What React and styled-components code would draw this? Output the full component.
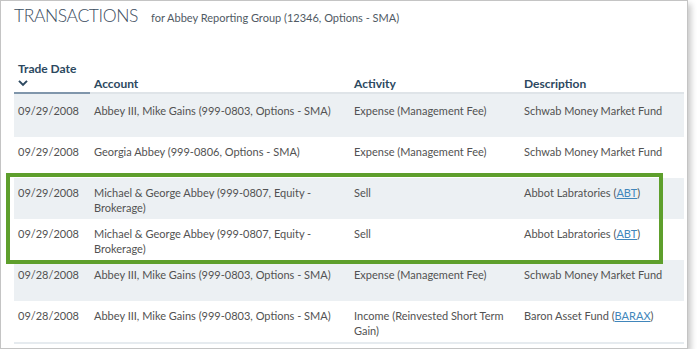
import React from 'react';
import styled, { createGlobalStyle } from 'styled-components';

const GlobalStyle = createGlobalStyle`
  body {
    margin: 0;
    background: #ffffff;
    font-family: Lato, "Open Sans", sans-serif;
  }
`;

const Frame = styled.div`
  width: 688px;
  height: 349px;
  border: 1px solid #c4c4c4;
  background: #fff;
  box-shadow: 3px 4px 6px rgba(0, 0, 0, 0.22);
  padding: 0 3px 0 13px;
  box-sizing: border-box;
  overflow: hidden;
`;

const TitleBar = styled.div`
  display: flex;
  align-items: baseline;
  gap: 13px;
  height: 56px;
  padding-top: 4px;
  box-sizing: border-box;
`;

const Title = styled.h1`
  margin: 0;
  font-size: 17.5px;
  font-weight: 300;
  color: #3b4d60;
  letter-spacing: -0.4px;
`;

const Subtitle = styled.span`
  font-size: 11px;
  color: #505a64;
`;

const Grid = styled.div`
  display: grid;
  grid-template-columns: 76px 260px 170px 1fr;
`;

const HeadRow = styled(Grid)`
  align-items: end;
  height: 37px;
`;

const HeadCell = styled.div`
  padding: 0 4px 1px;
  font-size: 12px;
  font-weight: 700;
  color: #2c4860;
  line-height: 15px;
  border-bottom: 2px solid ${(p) => (p.$sorted ? '#8096ab' : '#dfe4e8')};
`;

const SortMark = styled.div`
  display: flex;
  align-items: center;
  height: 15px;
`;

const Chevron = styled.svg`
  display: block;
  width: 10px;
  height: 7px;
`;

const Row = styled(Grid)`
  height: ${(p) => (p.$first ? '43px' : '41px')};
  background: ${(p) => (p.$shade ? '#ecf0f3' : '#ffffff')};
`;

const Cell = styled.div`
  padding: ${(p) => (p.$first ? '9px' : '7px')} 4px 0;
  font-size: 11px;
  line-height: 15px;
  color: #525252;
`;

const Ticker = styled.a`
  color: #4186bb;
  text-decoration: underline;
`;

const Group = styled.div`
  position: relative;
`;

const Highlight = styled.div`
  position: absolute;
  top: -5px;
  bottom: -4px;
  left: -8px;
  right: 21px;
  border: 4px solid #5e9f2c;
  pointer-events: none;
`;

const BottomRule = styled.div`
  height: 2px;
  background: #e6ebef;
`;

const rows = [
  { date: '09/29/2008', account: 'Abbey III, Mike Gains (999-0803, Options - SMA)', activity: 'Expense (Management Fee)', desc: 'Schwab Money Market Fund' },
  { date: '09/29/2008', account: 'Georgia Abbey (999-0806, Options - SMA)', activity: 'Expense (Management Fee)', desc: 'Schwab Money Market Fund' },
  { date: '09/29/2008', account: 'Michael & George Abbey (999-0807, Equity - Brokerage)', activity: 'Sell', desc: 'Abbot Labratories', ticker: 'ABT' },
  { date: '09/29/2008', account: 'Michael & George Abbey (999-0807, Equity - Brokerage)', activity: 'Sell', desc: 'Abbot Labratories', ticker: 'ABT' },
  { date: '09/28/2008', account: 'Abbey III, Mike Gains (999-0803, Options - SMA)', activity: 'Expense (Management Fee)', desc: 'Schwab Money Market Fund' },
  { date: '09/28/2008', account: 'Abbey III, Mike Gains (999-0803, Options - SMA)', activity: 'Income (Reinvested Short Term Gain)', desc: 'Baron Asset Fund', ticker: 'BARAX' },
];

const TxRow = ({ r, i }) => (
  <Row $shade={i % 2 === 0} $first={i === 0}>
    <Cell $first={i === 0}>{r.date}</Cell>
    <Cell $first={i === 0}>{r.account}</Cell>
    <Cell $first={i === 0}>{r.activity}</Cell>
    <Cell $first={i === 0}>
      {r.desc}
      {r.ticker && (
        <>
          {' ('}
          <Ticker href="#">{r.ticker}</Ticker>
          {')'}
        </>
      )}
    </Cell>
  </Row>
);

const App = () => (
  <>
    <GlobalStyle />
    <Frame>
      <TitleBar>
        <Title>TRANSACTIONS</Title>
        <Subtitle>for Abbey Reporting Group (12346, Options - SMA)</Subtitle>
      </TitleBar>
      <HeadRow>
        <HeadCell $sorted>
          Trade Date
          <SortMark>
            <Chevron viewBox="0 0 10 7">
              <path d="M0.3 1.6 L1.7 0.2 L5 3.5 L8.3 0.2 L9.7 1.6 L5 6.3 Z" fill="#2c4860" />
            </Chevron>
          </SortMark>
        </HeadCell>
        <HeadCell>Account</HeadCell>
        <HeadCell>Activity</HeadCell>
        <HeadCell>Description</HeadCell>
      </HeadRow>
      <TxRow r={rows[0]} i={0} />
      <TxRow r={rows[1]} i={1} />
      <Group>
        <TxRow r={rows[2]} i={2} />
        <TxRow r={rows[3]} i={3} />
        <Highlight />
      </Group>
      <TxRow r={rows[4]} i={4} />
      <TxRow r={rows[5]} i={5} />
      <BottomRule />
    </Frame>
  </>
);

export default App;
